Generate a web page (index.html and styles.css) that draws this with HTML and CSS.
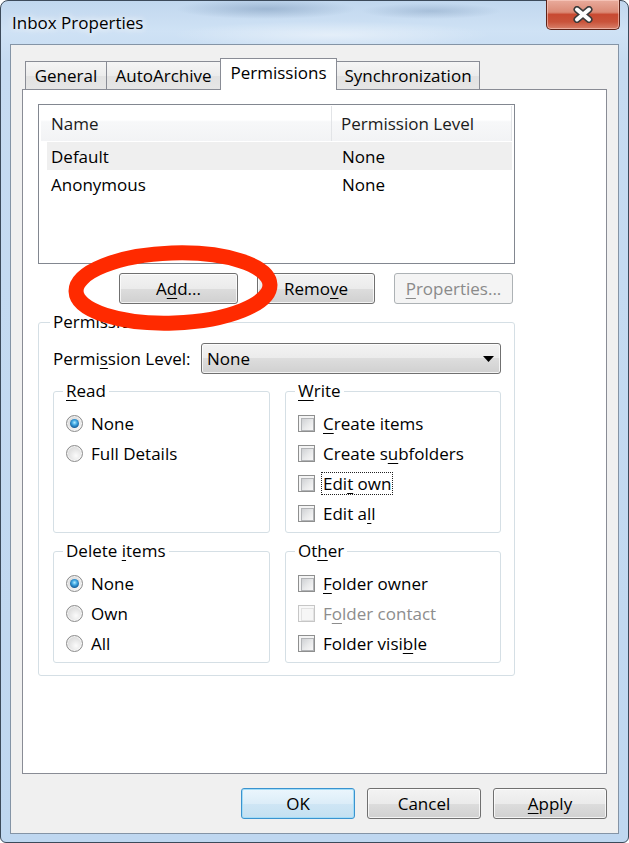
FILE: index.html
```html
<!DOCTYPE html>
<html>
<head>
<meta charset="utf-8">
<title>Inbox Properties</title>
<link rel="stylesheet" href="styles.css">
</head>
<body>
<div class="window">
  <div class="titlebar">
    <div class="title">Inbox Properties</div>
    <div class="close">
      <svg width="22" height="17" viewBox="0 0 22 17">
        <path d="M5 3.5 L17 13.5 M17 3.5 L5 13.5" stroke="#3a3a3a" stroke-width="7" stroke-linecap="round"/>
        <path d="M5 3.5 L17 13.5 M17 3.5 L5 13.5" stroke="#fdfdfd" stroke-width="4" stroke-linecap="round"/>
      </svg>
    </div>
  </div>
  <div class="client">
    <div class="tabs">
      <div class="tab t-general">General</div>
      <div class="tab t-auto">AutoArchive</div>
      <div class="tab t-perm active">Permissions</div>
      <div class="tab t-sync">Synchronization</div>
    </div>
    <div class="panel">
      <div class="list">
        <div class="list-head">
          <div class="hcol1">Name</div>
          <div class="hcol2">Permission Level</div>
        </div>
        <div class="row sel"><div class="col1">Default</div><div class="col2">None</div></div>
        <div class="row"><div class="col1">Anonymous</div><div class="col2">None</div></div>
      </div>
      <div class="list-buttons">
        <div class="btn w119">A<u>d</u>d...</div>
        <div class="btn w118">Remo<u>v</u>e</div>
        <div class="btn w119 disabled"><u>P</u>roperties...</div>
      </div>
      <fieldset class="group perms">
        <legend>Permissions</legend>
        <div class="level-row">
          <div class="level-label">Permi<u>s</u>sion Level:</div>
          <div class="combo">
            <span class="combo-value">None</span>
            <svg class="combo-arrow" width="11" height="6" viewBox="0 0 11 6"><path d="M0 0 H11 L5.5 6 Z" fill="#000"/></svg>
          </div>
        </div>
        <div class="grid">
          <fieldset class="group sub">
            <legend><u>R</u>ead</legend>
            <div class="opt"><span class="radio on"></span><span>None</span></div>
            <div class="opt"><span class="radio"></span><span>Full Details</span></div>
          </fieldset>
          <fieldset class="group sub">
            <legend><u>W</u>rite</legend>
            <div class="opt"><span class="check"></span><span><u>C</u>reate items</span></div>
            <div class="opt"><span class="check"></span><span>Create s<u>u</u>bfolders</span></div>
            <div class="opt"><span class="check"></span><span class="focus">Edi<u>t</u> own</span></div>
            <div class="opt"><span class="check"></span><span>Edit a<u>l</u>l</span></div>
          </fieldset>
          <fieldset class="group sub">
            <legend>Delete <u>i</u>tems</legend>
            <div class="opt"><span class="radio on"></span><span>None</span></div>
            <div class="opt"><span class="radio"></span><span>Own</span></div>
            <div class="opt"><span class="radio"></span><span>All</span></div>
          </fieldset>
          <fieldset class="group sub">
            <legend>Ot<u>h</u>er</legend>
            <div class="opt"><span class="check"></span><span><u>F</u>older owner</span></div>
            <div class="opt disabled-opt"><span class="check off"></span><span>F<u>o</u>lder contact</span></div>
            <div class="opt"><span class="check"></span><span>Folder visi<u>b</u>le</span></div>
          </fieldset>
        </div>
      </fieldset>
      <svg class="ellipse" width="240" height="110" viewBox="0 0 240 110">
        <ellipse cx="119" cy="53" rx="97" ry="35" fill="none" stroke="#ff2a00" stroke-width="15" transform="rotate(-2 119 53)"/>
      </svg>
    </div>
    <div class="footer">
      <div class="btn default">OK</div>
      <div class="btn">Cancel</div>
      <div class="btn"><u>A</u>pply</div>
    </div>
  </div>
</div>
</body>
</html>
```

FILE: styles.css
```css
* { box-sizing: border-box; }
html, body { margin: 0; padding: 0; }
body {
  width: 629px;
  height: 843px;
  overflow: hidden;
  background: #ffffff;
  font-family: "Open Sans", "Noto Sans", sans-serif;
  font-size: 17px;
  color: #000;
}
u { text-decoration-thickness: 1px; text-underline-offset: 3px; }

.window {
  width: 629px;
  height: 843px;
  border: 1px solid #3c4a5a;
  border-radius: 8px 8px 6px 6px;
  background:
    radial-gradient(ellipse 90px 10px at 265px 8px, rgba(110,140,175,0.45), rgba(110,140,175,0)),
    radial-gradient(ellipse 70px 8px at 430px 10px, rgba(110,140,175,0.35), rgba(110,140,175,0)),
    radial-gradient(ellipse 160px 14px at 330px 34px, rgba(255,255,255,0.45), rgba(255,255,255,0)),
    linear-gradient(180deg, #c1d7ee 0px, #cfe2f5 30px, #c6dbf1 60px, #bfd7f0 100%);
  display: flex;
  flex-direction: column;
}

.titlebar {
  flex: none;
  height: 43px;
  display: flex;
  align-items: flex-start;
  padding-left: 11px;
}
.title {
  align-self: center;
  line-height: 20px;
  color: #000;
  text-shadow: 0 0 6px rgba(255,255,255,0.95), 0 0 10px rgba(255,255,255,0.8);
}
.close {
  margin-left: auto;
  margin-right: 8px;
  margin-top: -1px;
  width: 74px;
  height: 30px;
  border: 1px solid #5e2318;
  border-top: none;
  border-radius: 0 0 5px 5px;
  background: linear-gradient(180deg, #e9ab9c 0%, #db8a76 42%, #c84a32 50%, #c9533a 75%, #d8806a 100%);
  box-shadow: inset 0 0 0 1px rgba(255,215,205,0.55);
  display: flex;
  align-items: center;
  justify-content: center;
}

.client {
  flex: none;
  margin-left: 9px;
  width: 609px;
  height: 790px;
  border: 1px solid #8494a6;
  background: #f0f0f0;
  padding-top: 13px;
}

.tabs {
  display: flex;
  align-items: flex-end;
  height: 31px;
  margin-left: 14px;
}
.tab {
  height: 28px;
  line-height: 27px;
  text-align: center;
  border: 1px solid #898c95;
  border-bottom: none;
  margin-left: -1px;
  background: linear-gradient(180deg, #f5f5f5 0%, #ececec 50%, #e2e2e2 52%, #e6e6e6 100%);
  white-space: nowrap;
}
.tab:first-child { margin-left: 0; }
.t-general { width: 82px; }
.t-auto { width: 115px; }
.t-perm { width: 117px; }
.t-sync { width: 144px; }
.tab.active {
  height: 32px;
  margin-bottom: -1px;
  padding-bottom: 4px;
  line-height: 27px;
  background: #ffffff;
  position: relative;
  z-index: 2;
}

.panel {
  position: relative;
  margin-left: 11px;
  width: 585px;
  height: 685px;
  border: 1px solid #898c95;
  background: #ffffff;
  padding: 14px 0 0 15px;
}

.list {
  width: 477px;
  height: 160px;
  border: 1px solid #828790;
  padding: 1px 2px;
  background: #fff;
}
.list-head {
  display: flex;
  width: 471px;
  height: 35px;
  line-height: 36px;
  background: linear-gradient(180deg, #ffffff 0%, #ffffff 40%, #f7f8f9 45%, #f2f3f5 100%);
  color: #1b1b1b;
}
.hcol1 {
  width: 291px;
  padding-left: 10px;
  border-right: 1px solid #e2e4e7;
}
.hcol2 {
  flex: 1;
  padding-left: 9px;
  border-right: 1px solid #e2e4e7;
}
.row {
  display: flex;
  margin-left: 6px;
  width: 465px;
  height: 28px;
  line-height: 30px;
}
.row.sel { margin-top: 1px; background: #efefef; }
.col1 { width: 291px; padding-left: 4px; }
.col2 { flex: 1; padding-left: 4px; }

.list-buttons {
  display: flex;
  gap: 19px;
  margin-top: 9px;
  padding-left: 81px;
}
.btn {
  height: 31px;
  border: 1px solid #707070;
  border-radius: 3px;
  background: linear-gradient(180deg, #f3f3f3 0%, #ebebeb 50%, #dddddd 50%, #d0d0d0 100%);
  box-shadow: inset 0 0 0 1px rgba(255,255,255,0.75);
  display: flex;
  align-items: center;
  justify-content: center;
  white-space: nowrap;
}
.w119 { width: 119px; }
.w118 { width: 118px; }
.btn.disabled {
  border-color: #adb2b5;
  background: #f4f4f4;
  color: #8a8a8a;
  box-shadow: none;
}

fieldset.group {
  margin: 0;
  border: 1px solid #d5dfe5;
  border-radius: 3px;
  min-width: 0;
}
fieldset.group > legend {
  padding: 0 3px;
  margin-left: -3px;
  line-height: 20px;
}
fieldset.group.perms {
  margin-top: 8px;
  width: 477px;
  padding: 11px 13px 12px 14px;
}
.level-row {
  display: flex;
  align-items: center;
  height: 31px;
}
.level-label { flex: 1; }
.combo {
  width: 300px;
  height: 31px;
  border: 1px solid #707070;
  border-radius: 3px;
  background: linear-gradient(180deg, #f3f3f3 0%, #ebebeb 50%, #dddddd 50%, #d0d0d0 100%);
  box-shadow: inset 0 0 0 1px rgba(255,255,255,0.75);
  display: flex;
  align-items: center;
  padding: 0 6px 0 5px;
}
.combo-value { flex: 1; }
.combo-arrow { flex: none; }

.grid {
  display: grid;
  grid-template-columns: 217px 216px;
  column-gap: 15px;
  row-gap: 8px;
  margin-top: 7px;
}
fieldset.group.sub {
  padding: 7px 8px 4px 12px;
}
.opt {
  display: flex;
  align-items: center;
  gap: 8px;
  height: 30px;
  white-space: nowrap;
}
.radio {
  flex: none;
  width: 17px;
  height: 17px;
  border-radius: 50%;
  border: 1px solid #8c8c8c;
  background: radial-gradient(circle at 60% 65%, #fbfbfb 0%, #e6e6e6 45%, #cfcfcf 100%);
  box-shadow: inset 0 0 0 1px rgba(255,255,255,0.6);
  position: relative;
}
.radio.on::after {
  content: "";
  position: absolute;
  left: 3px;
  top: 3px;
  width: 9px;
  height: 9px;
  border-radius: 50%;
  background: radial-gradient(circle at 50% 40%, #b4ecff 0%, #3ea6e2 35%, #17629f 70%, #0a3866 100%);
}
.check {
  flex: none;
  width: 17px;
  height: 17px;
  border: 1px solid #8e8f8f;
  background: #f4f4f4;
  padding: 2px;
}
.check::after {
  content: "";
  display: block;
  width: 100%;
  height: 100%;
  border: 1px solid #b2b4b7;
  background: linear-gradient(135deg, #cfd1d4 0%, #e9eaeb 55%, #f8f8f8 100%);
}
.check.off { border-color: #c6c6c6; background: #f8f8f8; }
.check.off::after { border-color: #e2e2e2; background: #f6f6f6; }
.disabled-opt { color: #8d8d8d; }
.focus {
  border: 1px dotted #222;
  margin-left: -2px;
  padding: 0 1px;
  line-height: 21px;
}

.ellipse {
  position: absolute;
  left: 31px;
  top: 145px;
  z-index: 3;
}

.footer {
  display: flex;
  justify-content: flex-end;
  gap: 12px;
  margin-top: 14px;
  padding-right: 11px;
}
.footer .btn { width: 114px; }
.btn.default {
  border-color: #3a93cf;
  background: linear-gradient(180deg, #ebf6fd 0%, #dcedf8 50%, #cfe6f5 50%, #c4e0f1 100%);
  box-shadow: inset 0 0 0 1px #a3dcf7;
}
```
